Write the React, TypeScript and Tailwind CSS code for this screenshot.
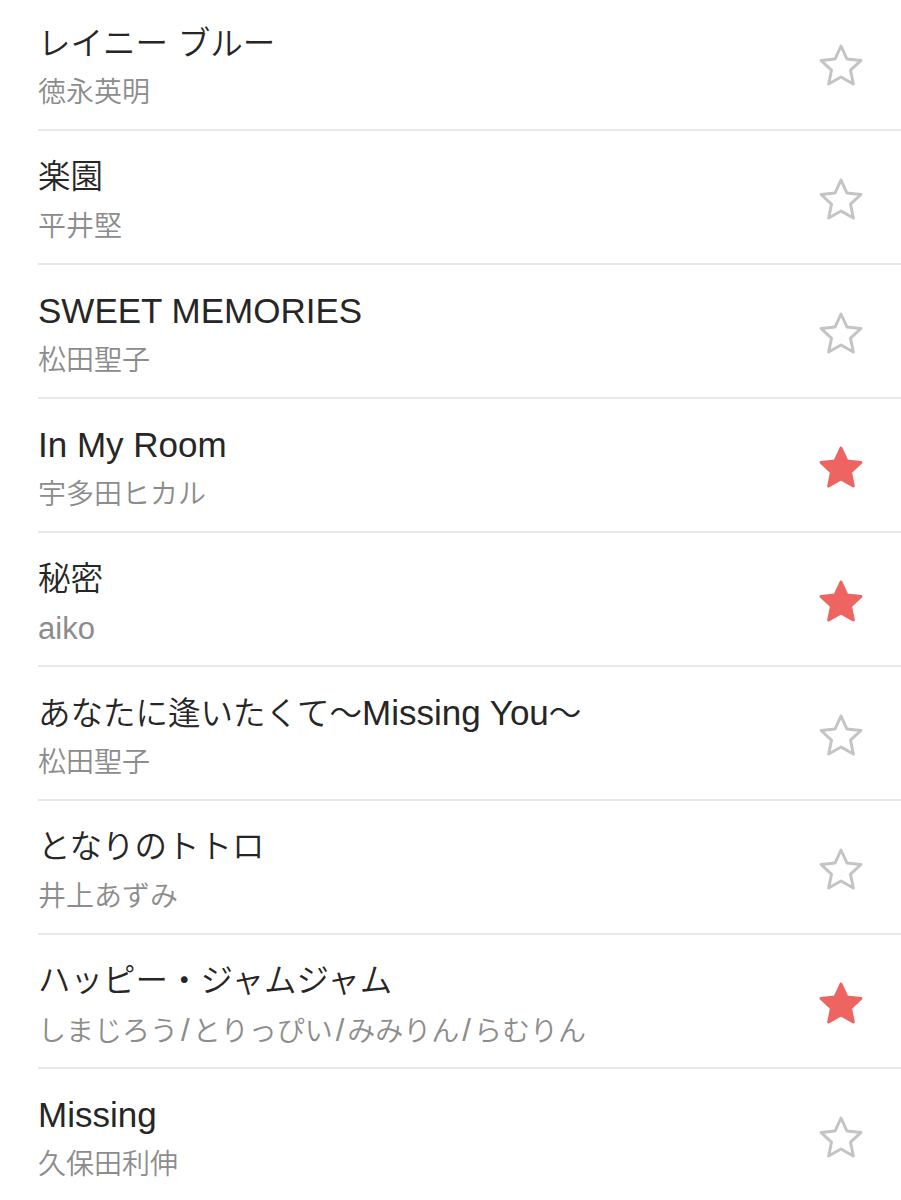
import React from 'react';

type Song = { title: string; artist: string; fav: boolean };

const songs: Song[] = [
  { title: 'レイニー ブルー', artist: '徳永英明', fav: false },
  { title: '楽園', artist: '平井堅', fav: false },
  { title: 'SWEET MEMORIES', artist: '松田聖子', fav: false },
  { title: 'In My Room', artist: '宇多田ヒカル', fav: true },
  { title: '秘密', artist: 'aiko', fav: true },
  { title: 'あなたに逢いたくて〜Missing You〜', artist: '松田聖子', fav: false },
  { title: 'となりのトトロ', artist: '井上あずみ', fav: false },
  { title: 'ハッピー・ジャムジャム', artist: 'しまじろう/とりっぴい/みみりん/らむりん', fav: true },
  { title: 'Missing', artist: '久保田利伸', fav: false },
];

type Run = { part: string; kind: 'latin' | 'slash' | 'cjk' };

// latin runs render a bit larger than the kana/kanji, like the iOS system font
const splitRuns = (text: string): Run[] =>
  text
    .split(/(\/|[\x20-\x7e]+)/)
    .filter(Boolean)
    .map((part) => ({
      part,
      kind: part === '/' ? 'slash' : /^[\x20-\x7e]+$/.test(part) ? 'latin' : 'cjk',
    }));

const STAR_POINTS =
  '0,-21 5.88,-8.09 19.97,-6.49 9.51,3.09 12.34,16.99 0,10 -12.34,16.99 -9.51,3.09 -19.97,-6.49 -5.88,-8.09';

const Star: React.FC<{ filled: boolean }> = ({ filled }) => (
  <svg width="48" height="48" viewBox="-24 -26 48 48" aria-hidden="true">
    <polygon
      points={STAR_POINTS}
      fill={filled ? '#ee6461' : 'none'}
      stroke={filled ? '#ee6461' : '#c4c4c4'}
      strokeWidth={3}
      strokeLinejoin="round"
    />
  </svg>
);

const SongRow: React.FC<{ song: Song }> = ({ song }) => (
  <div className="ml-[38px] flex h-[134px] items-center border-b-2 border-[#e8e8e8]">
    <div className="flex-1 self-start pt-[26px]">
      <div className="h-[40px] whitespace-nowrap text-[32px] font-[350] leading-[40px] text-[#262626]">
        {splitRuns(song.title).map((r, i) => (
          <span key={i} className={r.kind === 'cjk' ? 'text-[32.5px]' : 'text-[35px]'}>
            {r.part}
          </span>
        ))}
      </div>
      <div className="mt-[12px] h-[36px] whitespace-nowrap text-[28px] font-[350] leading-[36px] text-[#8c8c8c]">
        {splitRuns(song.artist).map((r, i) =>
          r.kind === 'slash' ? (
            <span key={i} className="px-[3px] text-[31px]">
              {r.part}
            </span>
          ) : (
            <span key={i} className={r.kind === 'latin' ? 'text-[31px]' : 'text-[28px]'}>
              {r.part}
            </span>
          ),
        )}
      </div>
    </div>
    <div className="pr-[36px] pt-[3px]">
      <Star filled={song.fav} />
    </div>
  </div>
);

export default function App() {
  return (
    <div className="min-h-screen overflow-hidden bg-white font-['Liberation_Sans','Noto_Sans_CJK_JP',sans-serif]">
      <div className="-mt-[3px]">
        {songs.map((s, i) => (
          <SongRow key={i} song={s} />
        ))}
      </div>
    </div>
  );
}
